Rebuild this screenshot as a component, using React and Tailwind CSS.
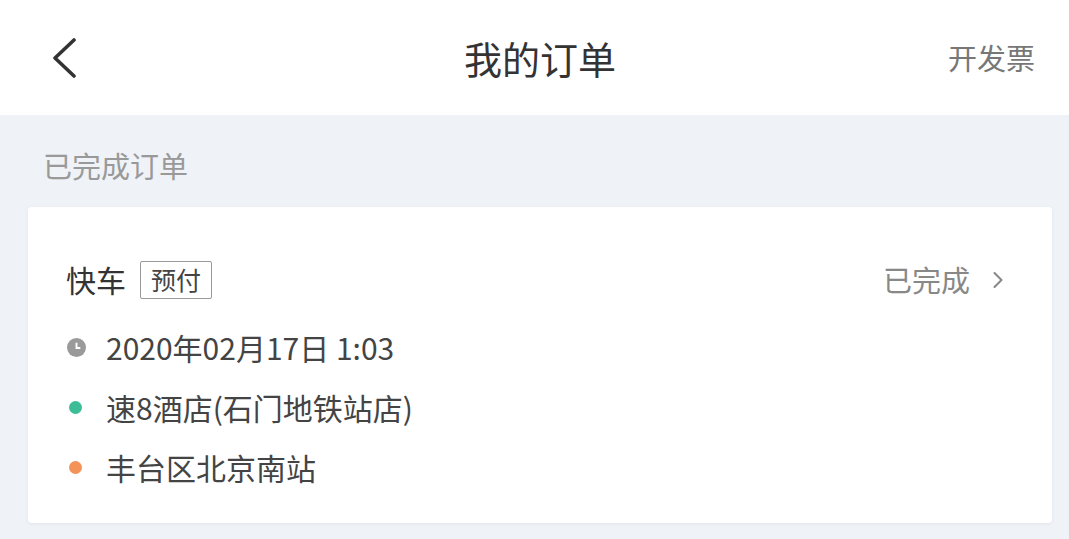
import { ChevronRight } from "lucide-react";

const font = { fontFamily: '"Noto Sans CJK SC", "Noto Sans", sans-serif' };

function Dot({ color }) {
  return <span className={`block w-[13px] h-[13px] rounded-full ${color}`} />;
}

export default function App() {
  return (
    <div className="w-[1069px] h-[539px] bg-[#eff2f6] overflow-hidden" style={font}>
      {/* header */}
      <div className="h-[115px] bg-white flex items-center justify-between pl-[50px] pr-[34px]">
        <svg viewBox="0 0 28 40" className="w-[28px] h-[40px]">
          <path d="M24 2 L5 20 L24 38" stroke="#333" strokeWidth="3.6" fill="none" strokeLinecap="round" strokeLinejoin="round" />
        </svg>
        <h1 className="text-[38px] text-[#333] ml-[54px]">我的订单</h1>
        <span className="text-[29px] text-[#777]">开发票</span>
      </div>

      {/* section title */}
      <div className="px-[43px] pt-[30px] pb-[22px] text-[29px] text-[#999] leading-[40px]">
        已完成订单
      </div>

      {/* order card */}
      <div className="mx-[28px] w-[1024px] bg-white rounded-[4px] shadow-[0_1px_4px_rgba(0,0,0,0.06)] pl-[38px] pr-[40px] pt-[50px] pb-[36px]">
        <div className="flex items-center justify-between">
          <div className="flex items-center gap-[14px]">
            <span className="text-[30px] text-[#333]">快车</span>
            <span className="border border-[#999] rounded-[2px] px-[10px] h-[38px] flex items-center text-[25px] text-[#444]">预付</span>
          </div>
          <div className="flex items-center gap-[14px] text-[#888]">
            <span className="text-[29px]">已完成</span>
            <ChevronRight className="w-[28px] h-[28px]" strokeWidth={1.8} />
          </div>
        </div>

        <div className="mt-[25px] flex flex-col gap-[20px] text-[30px] text-[#444] leading-[40px]">
          <div className="flex items-center gap-[20px]">
            <svg viewBox="0 0 20 20" className="w-[19px] h-[19px] ml-[1px]">
              <circle cx="10" cy="10" r="10" fill="#9a9a9a" />
              <path d="M10 5v5.5h4" stroke="#fff" strokeWidth="2" fill="none" />
            </svg>
            <span>2020年02月17日 1:03</span>
          </div>
          <div className="flex items-center gap-[24px]">
            <span className="ml-[3px]"><Dot color="bg-[#3cbd98]" /></span>
            <span>速8酒店(石门地铁站店)</span>
          </div>
          <div className="flex items-center gap-[24px]">
            <span className="ml-[3px]"><Dot color="bg-[#f39358]" /></span>
            <span>丰台区北京南站</span>
          </div>
        </div>
      </div>
    </div>
  );
}
